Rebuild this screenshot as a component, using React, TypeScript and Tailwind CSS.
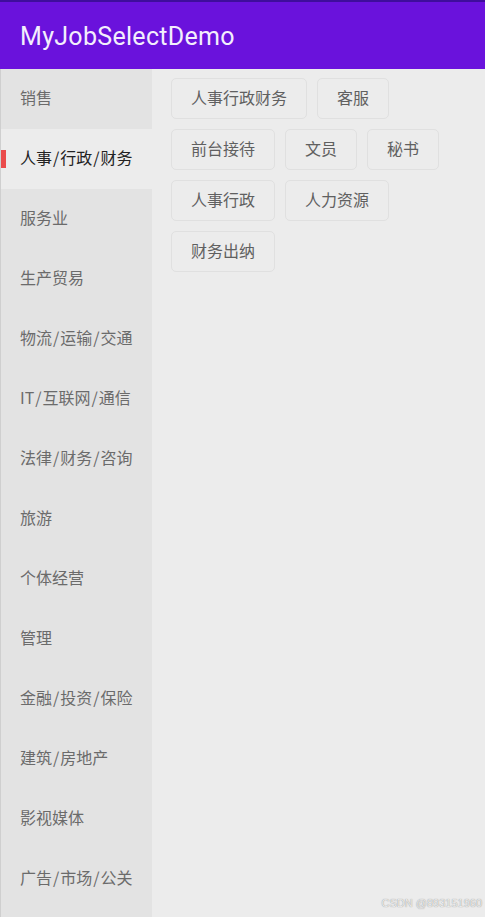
import React, { useState } from "react"

const categories = [
  "销售",
  "人事/行政/财务",
  "服务业",
  "生产贸易",
  "物流/运输/交通",
  "IT/互联网/通信",
  "法律/财务/咨询",
  "旅游",
  "个体经营",
  "管理",
  "金融/投资/保险",
  "建筑/房地产",
  "影视媒体",
  "广告/市场/公关",
]

const jobs = ["人事行政财务", "客服", "前台接待", "文员", "秘书", "人事行政", "人力资源", "财务出纳"]

const cjk = { fontFamily: "'Noto Sans CJK SC', 'Noto Sans', sans-serif" }

// slashes in the reference are a bit wider than Noto's
function Label({ text }: { text: string }) {
  const parts = text.split("/")
  return (
    <span>
      {parts.map((p, i) => (
        <React.Fragment key={i}>
          {i > 0 && <span className="px-[1px]">/</span>}
          {p}
        </React.Fragment>
      ))}
    </span>
  )
}

export default function App() {
  const [selected, setSelected] = useState(1)

  return (
    <div className="h-[917px] w-[485px] overflow-hidden bg-[#ececec] flex flex-col" style={cjk}>
      <header className="h-[69px] shrink-0 bg-[#6a12dc] border-t-2 border-[#3f0d9c] flex items-center px-5">
        <h1
          className="text-[25px] leading-none text-[#f3eefc] tracking-[0.3px] mt-[1px]"
          style={{ fontFamily: "Roboto, sans-serif" }}
        >
          MyJobSelectDemo
        </h1>
      </header>

      <div className="flex flex-1 min-h-0">
        <nav className="w-[152px] shrink-0 bg-[#e3e3e3] border-l border-[#cfcfcf] flex flex-col">
          {categories.map((name, i) => {
            const active = i === selected
            return (
              <button
                key={name}
                type="button"
                onClick={() => setSelected(i)}
                className={
                  "relative h-[60px] shrink-0 flex items-center pl-[19px] pb-[4px] text-left text-[16px] " +
                  (active ? "bg-[#ececec] text-[#222222]" : "text-[#6b6b6b]")
                }
              >
                {active && <span className="absolute left-0 top-[21px] h-[18px] w-[5px] bg-[#ea4b4b]" />}
                <Label text={name} />
              </button>
            )
          })}
        </nav>

        <main className="flex-1 relative">
          <div className="flex flex-wrap gap-[10px] pt-[9px] pl-[19px] pr-1">
            {jobs.map((job) => (
              <div
                key={job}
                className="h-[41px] px-[19px] pb-[4px] flex items-center rounded-[5px] border border-[#e0e0e0] text-[16px] text-[#606060]"
              >
                {job}
              </div>
            ))}
          </div>
          <span
            className="absolute right-[3px] bottom-[6px] text-[11px] text-[#ececec] [text-shadow:0_0_1px_#7a7a7a]"
            style={{ fontFamily: "'Liberation Sans', sans-serif" }}
          >
            CSDN @893151960
          </span>
        </main>
      </div>
    </div>
  )
}
